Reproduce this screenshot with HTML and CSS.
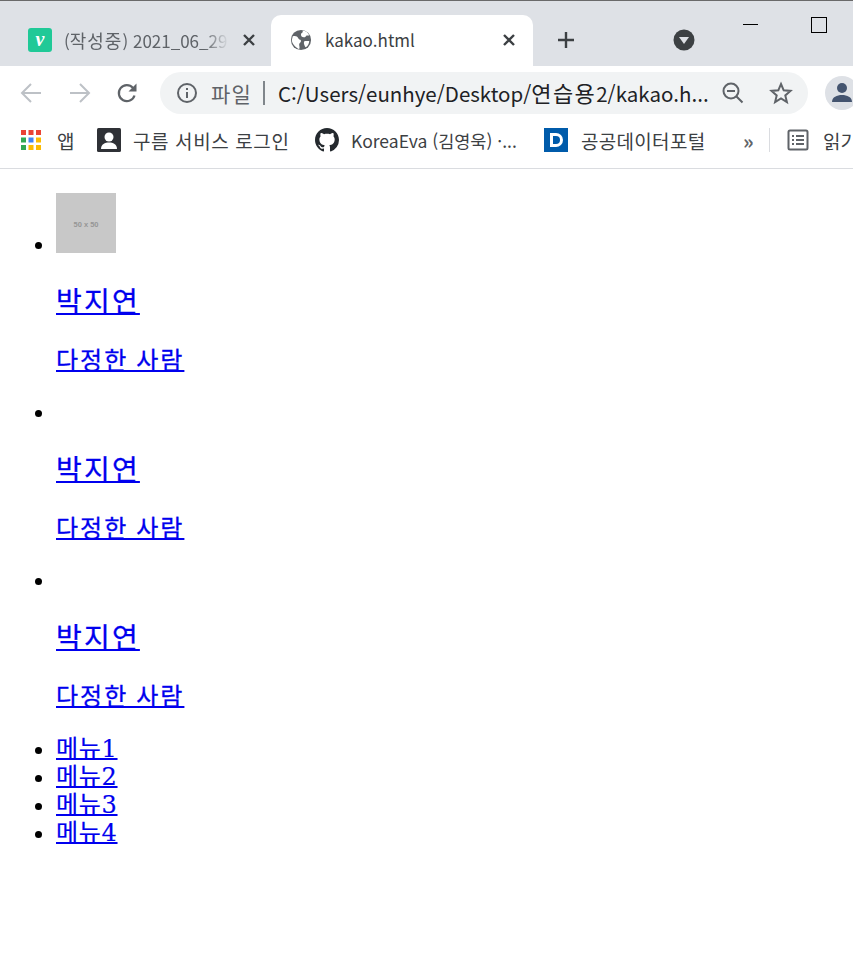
FILE: index.html
```html
<!DOCTYPE html>
<html lang="ko">
<head>
<meta charset="utf-8">
<title>kakao.html</title>
<link rel="stylesheet" href="styles.css">
</head>
<body>
<header class="chrome">
  <div class="tabstrip">
    <div class="tab tab-inactive">
      <svg class="fav" viewBox="0 0 24 24"><rect width="24" height="24" rx="3" fill="#20c997"/><text x="12" y="18" text-anchor="middle" class="fav-v">v</text></svg>
      <span class="tab-title fade">(<span class="wide">작성중</span>) 2021_06_29</span>
      <svg class="close" viewBox="0 0 14 14"><path d="M2 2l10 10M12 2L2 12" stroke="#3c4043" stroke-width="2.400"/></svg>
    </div>
    <div class="tab tab-active">
      <svg class="globe" viewBox="0 0 24 24"><circle cx="12" cy="12" r="11" fill="#5f6368"/><path d="M3 8c3-1 5 0 6 2s3 1 3 3-2 2-2 4 1 3 0 5C6 20 2 16 2 12zM14 2c3 0 6 2 7 5h-3c-1 1-1 2-3 2s-3-1-3-3 2-1 2-4zM16 13h5c0 3-2 6-4 7-1-2-3-5-1-7z" fill="#fff"/></svg>
      <span class="tab-title">kakao.html</span>
      <svg class="close" viewBox="0 0 14 14"><path d="M2 2l10 10M12 2L2 12" stroke="#3c4043" stroke-width="2.400"/></svg>
    </div>
    <svg class="newtab" viewBox="0 0 18 18"><path d="M9 1v16M1 9h16" stroke="#3c4043" stroke-width="2.4"/></svg>
    <svg class="search-tabs" viewBox="0 0 22 22"><circle cx="11" cy="11" r="10.5" fill="#3c4043"/><path d="M6 8h10l-5 7z" fill="#dee1e6"/></svg>
    <div class="winbtns">
      <span class="win-min"></span>
      <span class="win-max"></span>
    </div>
  </div>
  <div class="toolbar">
    <svg class="nav nav-back" viewBox="0 0 22 22"><path d="M21 11H3M11 2l-9 9 9 9" fill="none" stroke="#bdc1c6" stroke-width="2"/></svg>
    <svg class="nav nav-fwd" viewBox="0 0 22 22"><path d="M1 11h18M11 2l9 9-9 9" fill="none" stroke="#bdc1c6" stroke-width="2"/></svg>
    <svg class="nav nav-reload" viewBox="0 0 22 22"><path d="M18.5 13.5a8 8 0 1 1-1.6-7.6" fill="none" stroke="#5f6368" stroke-width="2.2"/><path d="M20.500 1.500v8h-8z" fill="#5f6368"/></svg>
    <div class="omnibox">
      <svg class="info" viewBox="0 0 22 22"><circle cx="11" cy="11" r="9" fill="none" stroke="#5f6368" stroke-width="2"/><path d="M11 10v6M11 6v2" stroke="#5f6368" stroke-width="2"/></svg>
      <span class="scheme">파일</span>
      <span class="omni-div"></span>
      <span class="url">C:/Users/eunhye/Desktop/<span class="wide-url">연습용</span>2/kakao.h...</span>
      <svg class="zoomout" viewBox="0 0 22 22"><circle cx="9" cy="9" r="7.500" fill="none" stroke="#5f6368" stroke-width="2"/><path d="M14.500 14.500l6 6M5 9h8" stroke="#5f6368" stroke-width="2"/></svg>
      <svg class="star" viewBox="0 0 24 24"><path d="M12 3l2.700 6.300 6.800.6-5.200 4.500 1.600 6.700L12 17.500l-5.900 3.600 1.600-6.700L2.500 9.900l6.800-.6z" fill="none" stroke="#5f6368" stroke-width="2"/></svg>
    </div>
    <svg class="avatar" viewBox="0 0 34 34"><circle cx="17" cy="17" r="17" fill="#dee1e6"/><circle cx="17" cy="12" r="5" fill="#44546f"/><path d="M7 26c0-5 5-7 10-7s10 2 10 7z" fill="#44546f"/></svg>
  </div>
  <div class="bookmarks">
    <svg class="bm-apps" viewBox="0 0 20 20">
      <rect x="0" y="0" width="5" height="5" fill="#ea4335"/><rect x="7.500" y="0" width="5" height="5" fill="#ea4335"/><rect x="15" y="0" width="5" height="5" fill="#ea4335"/>
      <rect x="0" y="7.500" width="5" height="5" fill="#34a853"/><rect x="7.500" y="7.500" width="5" height="5" fill="#4285f4"/><rect x="15" y="7.500" width="5" height="5" fill="#fbbc04"/>
      <rect x="0" y="15" width="5" height="5" fill="#34a853"/><rect x="7.500" y="15" width="5" height="5" fill="#fbbc04"/><rect x="15" y="15" width="5" height="5" fill="#fbbc04"/>
    </svg>
    <span class="bm-text bm-t-apps">앱</span>
    <svg class="bm-person" viewBox="0 0 24 24"><rect width="24" height="24" rx="1.500" fill="#2f3136"/><circle cx="12" cy="9" r="4.500" fill="#fff"/><path d="M4 21c0-5 4-6.500 8-6.500s8 1.500 8 6.500z" fill="#fff"/></svg>
    <span class="bm-text bm-t-goorm">구름 서비스 로그인</span>
    <svg class="bm-gh" viewBox="0 0 16 16"><path fill="#24292e" d="M8 0C3.580 0 0 3.580 0 8c0 3.540 2.290 6.530 5.470 7.590.4.070.55-.17.55-.38 0-.19-.01-.82-.01-1.490-2.010.37-2.530-.49-2.690-.94-.09-.23-.48-.94-.82-1.130-.28-.15-.68-.52-.01-.53.63-.01 1.080.58 1.230.82.720 1.210 1.870.87 2.330.66.070-.52.280-.87.510-1.070-1.780-.2-3.640-.89-3.640-3.950 0-.87.310-1.590.820-2.150-.08-.2-.36-1.020.08-2.120 0 0 .67-.21 2.200.82.640-.18 1.320-.27 2-.27s1.360.09 2 .27c1.530-1.040 2.200-.82 2.200-.82.440 1.100.160 1.920.080 2.120.510.560.820 1.270.820 2.150 0 3.070-1.870 3.750-3.650 3.950.290.250.540.730.540 1.480 0 1.070-.01 1.930-.01 2.200 0 .21.150.46.550.38A8.010 8.010 0 0 0 16 8c0-4.420-3.580-8-8-8z"/></svg>
    <span class="bm-text bm-t-korea">KoreaEva (김영욱) ·...</span>
    <svg class="bm-d" viewBox="0 0 24 24"><rect width="24" height="24" fill="#005baa"/><path d="M6 5h6a7 7 0 0 1 0 14H6z" fill="#fff"/><path d="M9 8h3a4 4 0 0 1 0 8H9z" fill="#005baa"/></svg>
    <span class="bm-text bm-t-data">공공데이터포털</span>
    <span class="bm-more">»</span>
    <span class="bm-div"></span>
    <svg class="bm-read" viewBox="0 0 22 22"><rect x="1.500" y="1.500" width="19" height="19" rx="1.500" fill="none" stroke="#5f6368" stroke-width="2"/><path d="M5 7h2M9 7h8M5 11h2M9 11h8M5 15h2M9 15h8" stroke="#5f6368" stroke-width="2"/></svg>
    <span class="bm-text bm-t-read">읽기 목록</span>
  </div>
</header>
<main class="page">
  <ul class="list">
    <li>
      <a href="#"><svg class="thumb" viewBox="0 0 60 60"><rect width="60" height="60" fill="#c8c8c8"/><text x="30" y="34" text-anchor="middle" class="thumb-text">50 x 50</text></svg></a>
      <h2 class="name"><a href="#">박지연</a></h2>
      <p class="desc"><a href="#">다정한 사람</a></p>
    </li>
    <li>
      <a href="#"></a><br>
      <h2 class="name"><a href="#">박지연</a></h2>
      <p class="desc"><a href="#">다정한 사람</a></p>
    </li>
    <li>
      <a href="#"></a><br>
      <h2 class="name"><a href="#">박지연</a></h2>
      <p class="desc"><a href="#">다정한 사람</a></p>
    </li>
  </ul>
  <ul class="menu">
    <li><a href="#">메뉴1</a></li>
    <li><a href="#">메뉴2</a></li>
    <li><a href="#">메뉴3</a></li>
    <li><a href="#">메뉴4</a></li>
  </ul>
</main>
</body>
</html>
```
FILE: styles.css
```css
html, body { margin: 0; padding: 0; background: #fff; }
body { width: 853px; height: 955px; overflow: hidden; font-family: "Liberation Serif", "Noto Sans CJK KR", serif; font-size: 24px; }
svg { display: block; flex: none; }

.chrome { font-family: "Noto Sans CJK KR", "Noto Sans", sans-serif; border-bottom: 1px solid #dadce0; }
.tabstrip { height: 65px; background: #dee1e6; border-top: 1px solid #6a6a6a; display: flex; align-items: flex-end; }
.tab { height: 51px; display: flex; align-items: center; font-size: 17px; box-sizing: border-box; }
.tab-inactive { width: 271px; padding-left: 28px; color: #5f6368; padding-bottom: 2px; }
.tab-active { width: 262px; padding-left: 19px; background: #fff; border-radius: 10px 10px 0 0; color: #3c4043; padding-bottom: 2px; }
.fav { width: 24px; height: 24px; margin-right: 12px; }
.fav-v { font: italic bold 20px "Liberation Serif", serif; fill: #fff; }
.globe { width: 22px; height: 22px; margin-right: 13px; }
.tab-title { white-space: nowrap; overflow: hidden; }
.wide { font-size: 18px; letter-spacing: 1px; }
.tab-inactive .tab-title { width: 165px; }
.tab-active .tab-title { width: 164px; }
.fade { -webkit-mask-image: linear-gradient(to right, #000 85%, transparent); mask-image: linear-gradient(to right, #000 85%, transparent); }
.close { width: 14px; height: 14px; margin-left: 13px; }
.newtab { width: 18px; height: 18px; margin: 0 0 17px 24px; }
.search-tabs { width: 22px; height: 22px; margin: 0 0 15px 98px; }
.winbtns { margin-left: auto; align-self: stretch; display: flex; align-items: flex-start; }
.win-min { width: 15px; height: 1px; background: #000; margin: 23px 53px 0 0; }
.win-max { width: 14px; height: 14px; border: 1px solid #000; margin: 16px 26px 0 0; }

.toolbar { height: 54px; background: #fff; display: flex; align-items: center; padding-left: 20px; overflow: hidden; }
.nav { width: 22px; height: 22px; }
.nav-fwd { margin-left: 27px; }
.nav-reload { margin-left: 25px; }
.omnibox { width: 648px; height: 42px; margin-left: 22px; border-radius: 21px; background: #f1f3f4; display: flex; align-items: center; padding-left: 16px; box-sizing: border-box; flex: none; }
.info { width: 22px; height: 22px; }
.scheme { margin-left: 13px; font-size: 21px; letter-spacing: 1.300px; color: #5f6368; width: 42px; white-space: nowrap; }
.omni-div { width: 2px; height: 24px; background: #80868b; margin-left: 10px; }
.url { margin-left: 13px; padding-bottom: 3px; font-size: 20.500px; color: #202124; width: 432px; white-space: nowrap; overflow: hidden; }
.wide-url { font-size: 22px; letter-spacing: 1.400px; }
.zoomout { width: 22px; height: 22px; margin-left: 12px; }
.star { width: 24px; height: 24px; margin-left: 25px; }
.avatar { width: 34px; height: 34px; margin-left: 17px; }

.bookmarks { height: 48px; box-sizing: border-box; padding: 0 0 8px 21px; background: #fff; display: flex; align-items: center; overflow: hidden; white-space: nowrap; }
.bookmarks > * { flex: none; }
.bm-text { font-size: 17.500px; color: #3c4043; }
.bm-apps { width: 20px; height: 20px; }
.bm-t-apps { margin-left: 16px; width: 40px; font-size: 19px; }
.bm-person { width: 24px; height: 24px; }
.bm-t-goorm { margin-left: 12px; width: 170px; font-size: 19px; letter-spacing: .600px; }
.bm-gh { width: 24px; height: 24px; margin-left: 12px; }
.bm-t-korea { margin-left: 12px; width: 181px; }
.bm-d { width: 24px; height: 24px; margin-left: 12px; }
.bm-t-data { margin-left: 13px; width: 162px; font-size: 19px; letter-spacing: .300px; }
.bm-more { font-size: 20px; font-weight: bold; color: #5f6368; width: 26px; }
.bm-div { width: 1px; height: 24px; background: #dadce0; }
.bm-read { width: 22px; height: 22px; margin-left: 17px; }
.bm-t-read { margin-left: 14px; font-size: 19px; }

.page { display: block; }
.list, .menu { margin: 0; padding: 0 0 0 56px; }
.list { padding-top: 24px; }
.list li { height: 168px; line-height: 28px; }
.list li:first-child { height: 206px; }
.thumb { display: inline-block; width: 60px; height: 60px; vertical-align: baseline; }
.thumb-text { font: bold 7.500px "Liberation Sans", sans-serif; fill: #969696; }
.name { margin: 28px 0 0; font-size: 28px; line-height: 32px; font-weight: normal; letter-spacing: 2.200px; -webkit-text-stroke: .3px #0000ee; }
.desc { margin: 28px 0 0; font-size: 24px; line-height: 28px; letter-spacing: 2px; -webkit-text-stroke: .3px #0000ee; }
.menu li { line-height: 28px; font-size: 24px; font-family: "DejaVu Serif", "Noto Sans CJK KR", serif; letter-spacing: .700px; -webkit-text-stroke: .2px #0000ee; }
a { color: #0000ee; text-decoration: underline; text-decoration-thickness: 2px; }
```
